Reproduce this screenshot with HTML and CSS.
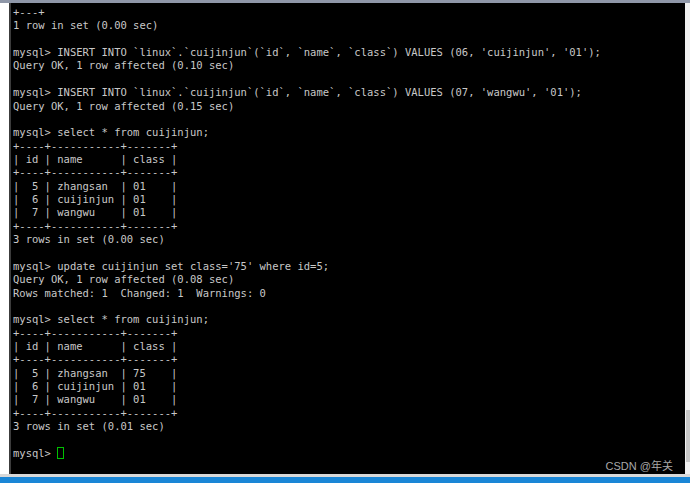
FILE: index.html
```html
<!DOCTYPE html>
<html>
<head>
<meta charset="utf-8">
<link rel="stylesheet" href="styles.css">
</head>
<body>
<div class="screen">
  <div class="topbar"></div>
  <div class="middle">
    <div class="gutter"></div>
    <div class="term">
<pre class="out">+---+
1 row in set (0.00 sec)

mysql&gt; INSERT INTO `linux`.`cuijinjun`(`id`, `name`, `class`) VALUES (06, 'cuijinjun', '01');
Query OK, 1 row affected (0.10 sec)

mysql&gt; INSERT INTO `linux`.`cuijinjun`(`id`, `name`, `class`) VALUES (07, 'wangwu', '01');
Query OK, 1 row affected (0.15 sec)

mysql&gt; select * from cuijinjun;
+----+-----------+-------+
| id | name      | class |
+----+-----------+-------+
|  5 | zhangsan  | 01    |
|  6 | cuijinjun | 01    |
|  7 | wangwu    | 01    |
+----+-----------+-------+
3 rows in set (0.00 sec)

mysql&gt; update cuijinjun set class='75' where id=5;
Query OK, 1 row affected (0.08 sec)
Rows matched: 1  Changed: 1  Warnings: 0

mysql&gt; select * from cuijinjun;
+----+-----------+-------+
| id | name      | class |
+----+-----------+-------+
|  5 | zhangsan  | 75    |
|  6 | cuijinjun | 01    |
|  7 | wangwu    | 01    |
+----+-----------+-------+
3 rows in set (0.01 sec)

mysql&gt; <span class="cursor"></span></pre>
      <span class="watermark">CSDN @年关</span>
    </div>
    <div class="scrollbar"><div class="thumb"></div></div>
  </div>
  <div class="bottomline"></div>
  <div class="bluebar"></div>
</div>
</body>
</html>
```

FILE: styles.css
```css
html, body {
  margin: 0;
  padding: 0;
  background: #ffffff;
}
.screen {
  width: 690px;
  height: 483px;
  display: flex;
  flex-direction: column;
  overflow: hidden;
}
.topbar {
  height: 3px;
  background: #8f97a8;
  flex: none;
}
.middle {
  flex: 1;
  display: flex;
  min-height: 0;
}
.gutter {
  width: 9px;
  flex: none;
  background: #ffffff;
  border-right: 2px solid #3c3c3c;
}
.term {
  flex: 1;
  background: #000000;
  position: relative;
  padding: 3px 0 0 2px;
  overflow: hidden;
}
.out {
  margin: 0;
  font-family: "DejaVu Sans Mono", monospace;
  font-size: 10.5px;
  line-height: 13.36px;
  color: #c8c8c8;
  white-space: pre;
}
.cursor {
  display: inline-block;
  width: 5px;
  height: 10px;
  border: 1px solid #00c000;
  vertical-align: -2px;
}
.watermark {
  position: absolute;
  right: 12px;
  bottom: 1px;
  font-family: "Liberation Sans", Arial, "Noto Sans CJK SC", sans-serif;
  font-size: 11px;
  color: #a8a8a8;
}
.scrollbar {
  width: 5px;
  flex: none;
  background: #f0f0f0;
  display: flex;
  flex-direction: column;
  justify-content: flex-end;
  padding-bottom: 12px;
}
.thumb {
  height: 52px;
  margin-left: 1px;
  background: #c8c8c8;
}
.bottomline {
  height: 3px;
  flex: none;
  background: #d8d8d8;
}
.bluebar {
  height: 6px;
  flex: none;
  background: #1a86d6;
}
```
